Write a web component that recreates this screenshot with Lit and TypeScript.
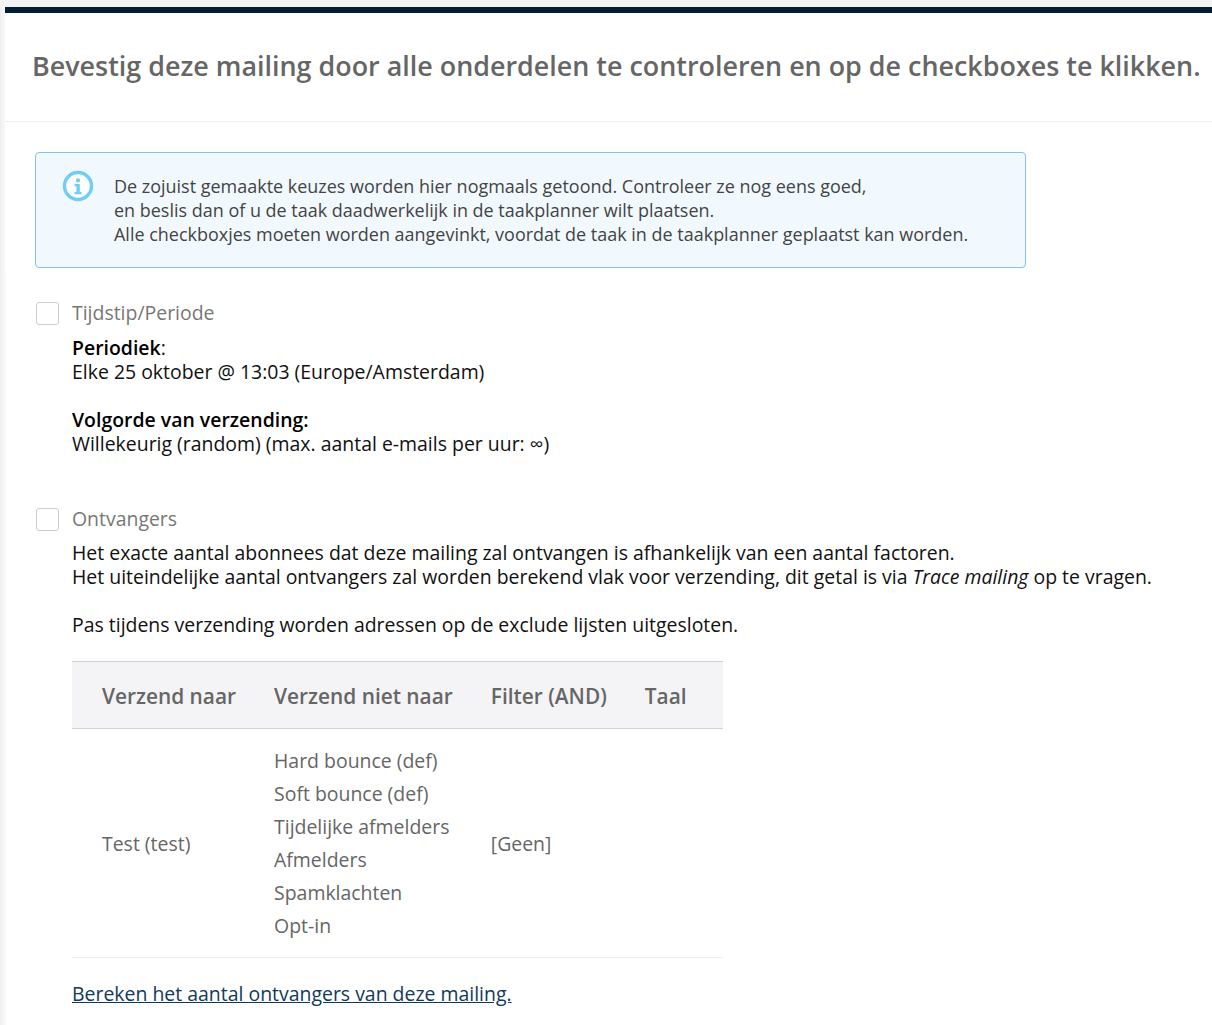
import { LitElement, html, css } from "lit";
import { customElement } from "lit/decorators.js";

@customElement("app-root")
export class AppRoot extends LitElement {
  static styles = css`
    :host {
      display: block;
      position: relative;
      height: 1025px;
      overflow: hidden;
      box-sizing: border-box;
      padding: 7px 0 0 5px;
      background: linear-gradient(to bottom, #f3f3f3 7px, transparent 7px),
        linear-gradient(to right, #efefef, #f8f8f8 5px);
      font-family: "Open Sans", sans-serif;
      font-size: 19.46px;
      line-height: 24px;
      color: #111;
    }
    :host::before {
      content: "";
      position: absolute;
      left: 5px;
      top: 273px;
      bottom: 0;
      width: 1px;
      background: #f8f8f8;
    }
    .panel {
      height: 100%;
      background: #fff;
      border-top: 6px solid #001f37;
    }
    .head {
      height: 109px;
      box-sizing: border-box;
      border-bottom: 1px solid #f0f0f0;
      padding: 0 0 2px 27px;
      display: flex;
      align-items: center;
    }
    h1 {
      margin: 0;
      font-size: 26.9px;
      font-weight: 600;
      line-height: 36px;
      color: #666;
      white-space: nowrap;
    }
    .body { padding: 30px 0 0 30px; }
    .alert {
      width: 991px;
      height: 116px;
      box-sizing: border-box;
      border: 1px solid #85c4e0;
      border-radius: 4px;
      background: #f1f9fe;
      display: flex;
      padding: 21px 0 0 26px;
      gap: 20px;
      font-size: 17.98px;
      color: #444;
    }
    .alert svg { flex: none; margin-top: -4px; }
    .alert p { margin: 0; }
    .check {
      display: flex;
      align-items: center;
      gap: 13px;
      margin-left: 1px;
      color: #777;
      height: 24px;
    }
    .box {
      width: 21px;
      height: 21px;
      border: 1px solid #ccc;
      border-radius: 3px;
      background: #fff;
    }
    .c1 { margin-top: 33px; }
    .c2 { margin-top: 51px; }
    .content { margin: 11px 0 0 37px; white-space: nowrap; }
    .ontv { margin-top: 10px; }
    .content p { margin: 0 0 24px; }
    b { font-weight: 600; color: #000; }
    table {
      border-collapse: collapse;
      color: #666;
    }
    th {
      background: #f4f4f6;
      border-top: 1px solid #d0d0d6;
      border-bottom: 1px solid #d0d0d6;
      height: 64px;
      padding: 2px 38px 0 30px;
      text-align: left;
      font-weight: 600;
      font-size: 20.85px;
    }
    th + th { padding-left: 0; }
    th:last-child { padding-right: 36px; }
    td {
      border-bottom: 1px solid #eee;
      padding: 17px 38px 15px 30px;
    }
    td + td { padding-left: 0; }
    td.lines { padding-top: 15px; }
    .lines div { line-height: 33px; }
    a {
      display: inline-block;
      margin-top: 24px;
      color: #123a5a;
      text-decoration: underline;
    }
  `;

  render() {
    return html`
      <div class="panel">
        <div class="head">
          <h1>Bevestig deze mailing door alle onderdelen te controleren en op de checkboxes te klikken.</h1>
        </div>
        <div class="body">
          <div class="alert">
            <svg width="32" height="32" viewBox="0 0 32 32" aria-hidden="true">
              <circle cx="16" cy="16" r="13.5" fill="#fff" stroke="#6fcdf8" stroke-width="3.4" />
              <circle cx="16" cy="10.4" r="2.1" fill="#6fcdf8" />
              <path d="M12.6 14h5.2v8h1.8v2.2h-7v-2.2h1.8v-5.8h-1.8z" fill="#6fcdf8" />
            </svg>
            <p>
              De zojuist gemaakte keuzes worden hier nogmaals getoond. Controleer ze nog eens goed,<br />
              en beslis dan of u de taak daadwerkelijk in de taakplanner wilt plaatsen.<br />
              Alle checkboxjes moeten worden aangevinkt, voordat de taak in de taakplanner geplaatst kan worden.
            </p>
          </div>

          <div class="check c1"><span class="box"></span>Tijdstip/Periode</div>
          <div class="content">
            <p><b>Periodiek</b>:<br />Elke 25 oktober @ 13:03 (Europe/Amsterdam)</p>
            <p><b>Volgorde van verzending:</b><br />Willekeurig (random) (max. aantal e-mails per uur: ∞)</p>
          </div>

          <div class="check c2"><span class="box"></span>Ontvangers</div>
          <div class="content ontv">
            <p>
              Het exacte aantal abonnees dat deze mailing zal ontvangen is afhankelijk van een aantal factoren.<br />
              Het uiteindelijke aantal ontvangers zal worden berekend vlak voor verzending, dit getal is via <i>Trace mailing</i> op te vragen.
            </p>
            <p>Pas tijdens verzending worden adressen op de exclude lijsten uitgesloten.</p>
            <table>
              <thead>
                <tr><th>Verzend naar</th><th>Verzend niet naar</th><th>Filter (AND)</th><th>Taal</th></tr>
              </thead>
              <tbody>
                <tr>
                  <td>Test (test)</td>
                  <td class="lines">
                    <div>Hard bounce (def)</div>
                    <div>Soft bounce (def)</div>
                    <div>Tijdelijke afmelders</div>
                    <div>Afmelders</div>
                    <div>Spamklachten</div>
                    <div>Opt-in</div>
                  </td>
                  <td>[Geen]</td>
                  <td></td>
                </tr>
              </tbody>
            </table>
            <a href="#">Bereken het aantal ontvangers van deze mailing.</a>
          </div>
        </div>
      </div>
    `;
  }
}
